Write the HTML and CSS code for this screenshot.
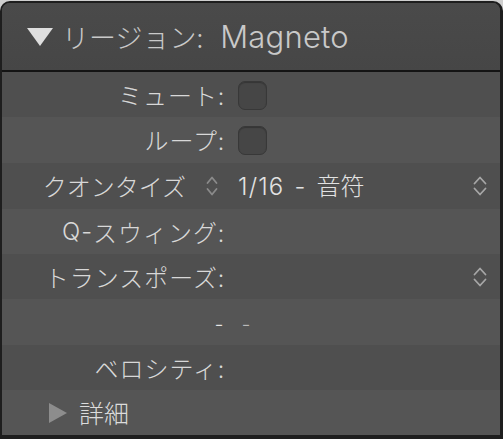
FILE: index.html
```html
<!DOCTYPE html>
<html lang="ja">
<head>
<meta charset="utf-8">
<title>リージョン: Magneto</title>
<link rel="stylesheet" href="styles.css">
</head>
<body>
<div class="panel">
  <div class="header">
    <svg class="tri-down" width="26" height="18" viewBox="0 0 26 18"><polygon points="0,0 26,0 13,18" fill="#dedede"/></svg>
    <span class="title">リージョン:</span><span class="latin name">Magneto</span>
  </div>
  <div class="rows">
    <div class="row odd">
      <div class="label">ミュート:</div>
      <div class="value"><span class="checkbox"></span></div>
    </div>
    <div class="row even">
      <div class="label">ループ:</div>
      <div class="value"><span class="checkbox"></span></div>
    </div>
    <div class="row odd">
      <div class="label"><span class="kana">クオンタイズ</span><svg class="chev-small" width="12" height="22" viewBox="0 0 12 22"><polyline points="1.5,8 6,2.5 10.5,8" /><polyline points="1.5,14 6,19.5 10.5,14" /></svg></div>
      <div class="value"><span><span class="latin num">1/16 - </span>音符</span></div>
      <svg class="chev" width="14" height="22" viewBox="0 0 14 22"><polyline points="1.5,8.5 7,2.5 12.5,8.5" /><polyline points="1.5,13.5 7,19.5 12.5,13.5" /></svg>
    </div>
    <div class="row even">
      <div class="label"><span class="latin">Q-</span>スウィング:</div>
      <div class="value"></div>
    </div>
    <div class="row odd">
      <div class="label">トランスポーズ:</div>
      <div class="value"></div>
      <svg class="chev" width="14" height="22" viewBox="0 0 14 22"><polyline points="1.5,8.5 7,2.5 12.5,8.5" /><polyline points="1.5,13.5 7,19.5 12.5,13.5" /></svg>
    </div>
    <div class="row even">
      <div class="label dash">-</div>
      <div class="value dim">-</div>
    </div>
    <div class="row odd">
      <div class="label">ベロシティ:</div>
      <div class="value"></div>
    </div>
    <div class="row even details">
      <svg class="tri-right" width="18" height="20" viewBox="0 0 18 20"><polygon points="0,0 18,10 0,20" fill="#8d8d8d"/></svg>
      <span class="details-text">詳細</span>
    </div>
  </div>
</div>
</body>
</html>
```

FILE: styles.css
```css
html, body {
  margin: 0;
  padding: 0;
}
body {
  width: 503px;
  height: 439px;
  overflow: hidden;
  background: #cfcfcf;
  font-family: "Noto Sans CJK JP", sans-serif;
  font-weight: 300;
}
.latin {
  font-family: "Inter", "Noto Sans CJK JP", sans-serif;
}
.panel {
  margin-top: 1px;
  height: 438px;
  box-sizing: border-box;
  border-style: solid;
  border-color: #1e1e1e;
  border-width: 2px 3px 4px 2px;
  border-radius: 10px 10px 0 0;
  overflow: hidden;
  background: #505050;
  display: flex;
  flex-direction: column;
}
.header {
  height: 67px;
  flex: none;
  background: linear-gradient(#4a4a4a, #464646);
  border-bottom: 2px solid #141414;
  display: flex;
  align-items: center;
  padding-left: 25px;
  color: #c9c9c9;
  font-size: 27px;
  white-space: nowrap;
}
.header .title {
  line-height: 1;
  margin-left: 9px;
}
.header .name {
  font-size: 31px;
  line-height: 1;
  margin-left: 17px;
  letter-spacing: 0.2px;
}
.rows {
  display: grid;
  grid-template-rows: 45px 46px 46px 45px 45px 46px 45px 45px;
}
.row {
  display: grid;
  grid-template-columns: 223px 1fr auto;
  column-gap: 13px;
  align-items: center;
  padding-right: 13px;
  font-size: 24px;
  color: #d8d8d8;
}
.row.odd { background: #4f4f4f; }
.row.even { background: #555555; }
.label {
  display: flex;
  justify-content: flex-end;
  align-items: center;
  white-space: nowrap;
  line-height: 1;
  letter-spacing: 1px;
}
.label .kana {
  letter-spacing: 0;
}
.value {
  display: flex;
  align-items: center;
  line-height: 1;
  white-space: pre;
  color: #e2e2e2;
  font-size: 24px;
}
.value .num {
  letter-spacing: 1.2px;
  word-spacing: 2px;
}
.value.dim {
  color: #b9b9b9;
  padding-left: 4px;
}
.label.dash {
  color: #e6e6e6;
  padding-right: 1px;
}
.checkbox {
  width: 29px;
  height: 29px;
  box-sizing: border-box;
  border-radius: 7px;
  background: #464646;
  border: 1px solid #383838;
  box-shadow: inset 0 1px 1px rgba(0,0,0,0.25);
  margin-top: 1px;
}
.chev-small {
  margin-left: 20px;
  margin-right: 7px;
  fill: none;
  stroke: #8a8a8a;
  stroke-width: 1.8;
  stroke-linecap: round;
  stroke-linejoin: round;
}
.chev {
  fill: none;
  stroke: #a6a6a6;
  stroke-width: 1.8;
  stroke-linecap: round;
  stroke-linejoin: round;
}
.row.details {
  display: flex;
  align-items: center;
  padding-left: 47px;
  gap: 12px;
}
.details-text {
  font-size: 25px;
  line-height: 1;
  color: #dcdcdc;
}
```
